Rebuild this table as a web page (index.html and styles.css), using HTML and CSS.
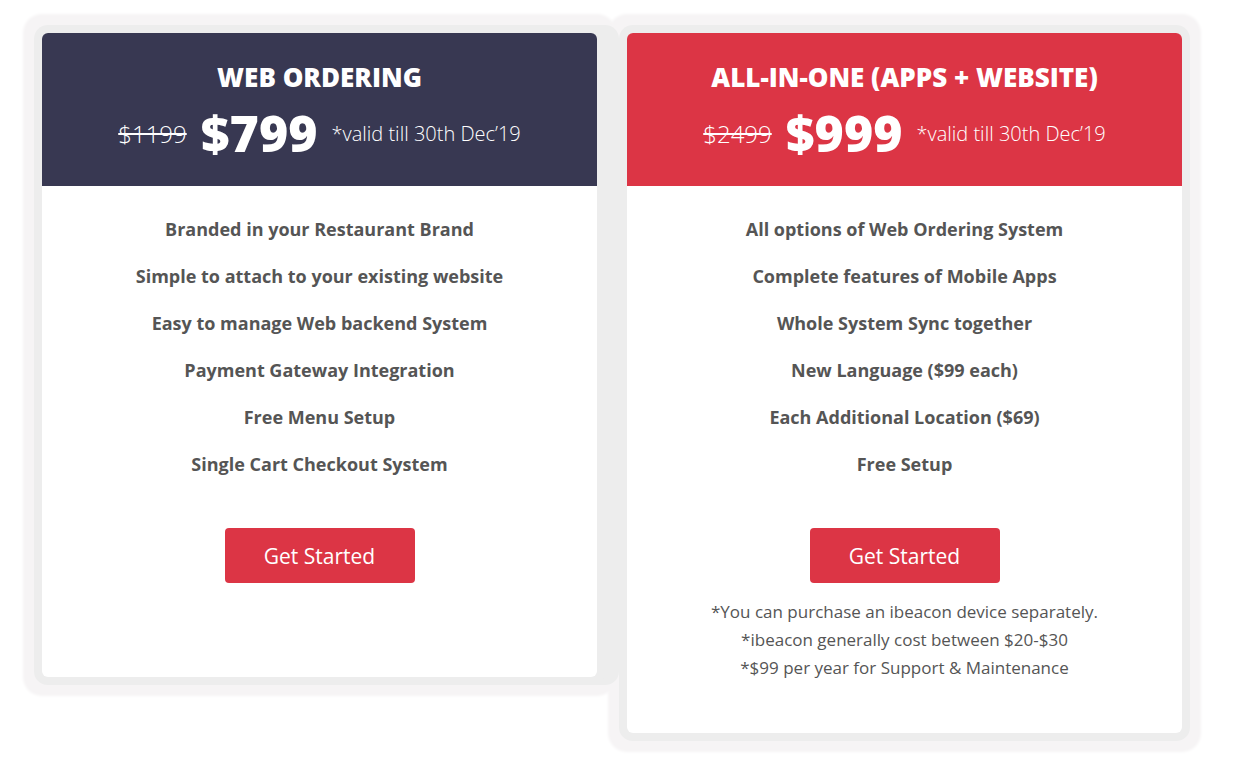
FILE: index.html
```html
<!DOCTYPE html>
<html lang="en">
<head>
  <meta charset="UTF-8" />
  <meta name="viewport" content="width=device-width, initial-scale=1.0" />
  <title>Pricing</title>
  <link rel="stylesheet" href="styles.css">
</head>
<body>
  <div class="plans">
    <div class="plan plan-short">
      <div class="plan-head dark">
        <h2>WEB ORDERING</h2>
        <div class="price">
          <span class="old">$1199</span>
          <span class="now">$799</span>
          <span class="valid">*valid till 30th Dec’19</span>
        </div>
      </div>
      <div class="plan-body">
        <ul class="features">
          <li>Branded in your Restaurant Brand</li>
          <li>Simple to attach to your existing website</li>
          <li>Easy to manage Web backend System</li>
          <li>Payment Gateway Integration</li>
          <li>Free Menu Setup</li>
          <li>Single Cart Checkout System</li>
        </ul>
        <button>Get Started</button>
      </div>
    </div>

    <div class="plan">
      <div class="plan-head red">
        <h2>ALL-IN-ONE (APPS + WEBSITE)</h2>
        <div class="price">
          <span class="old">$2499</span>
          <span class="now">$999</span>
          <span class="valid">*valid till 30th Dec’19</span>
        </div>
      </div>
      <div class="plan-body">
        <ul class="features">
          <li>All options of Web Ordering System</li>
          <li>Complete features of Mobile Apps</li>
          <li>Whole System Sync together</li>
          <li>New Language ($99 each)</li>
          <li>Each Additional Location ($69)</li>
          <li>Free Setup</li>
        </ul>
        <button>Get Started</button>
        <div class="notes">
          <p>*You can purchase an ibeacon device separately.</p>
          <p>*ibeacon generally cost between $20-$30</p>
          <p>*$99 per year for Support &amp; Maintenance</p>
        </div>
      </div>
    </div>
  </div>
</body>
</html>
```

FILE: styles.css
```css
* {
  box-sizing: border-box;
  margin: 0;
  padding: 0;
}

body {
  font-family: 'Open Sans', sans-serif;
  background: #fff;
  color: #555;
}

.plans {
  display: flex;
  align-items: flex-start;
  gap: 30px;
  padding: 33px 0 26px 42px;
}

.plan {
  position: relative;
  width: 555px;
  background: #fff;
  border-radius: 6px;
  box-shadow: 0 0 0 8px #ededed;
  text-align: center;
}

/* fill the gap between the two cards */
.plan-short {
  box-shadow: 0 0 0 8px #ededed, 14px 0 0 8px #ededed;
}

/* soft outer ring, kept behind both cards */
.plan::before {
  content: "";
  position: absolute;
  inset: 0;
  z-index: -1;
  border-radius: 6px;
  box-shadow: 0 0 3px 19px #f6f4f5;
}

.plan-head {
  height: 153px;
  padding-top: 27px;
  color: #fff;
  border-radius: 6px 6px 0 0;
}

.dark {
  background: #383852;
}

.red {
  background: #dc3545;
}

h2 {
  font-size: 26px;
  font-weight: 800;
  line-height: 34px;
}

.price {
  display: flex;
  justify-content: center;
  align-items: center;
  gap: 14px;
  margin-top: 9px;
}

.old {
  font-size: 24px;
  font-weight: 300;
  text-decoration: line-through;
}

.now {
  font-size: 50px;
  font-weight: 800;
  line-height: 60px;
}

.valid {
  font-size: 20px;
  font-weight: 300;
}

.plan-body {
  padding: 30px 20px 51px;
}

.plan-short .plan-body {
  padding-bottom: 94px;
}

.features {
  list-style: none;
}

.features li {
  font-size: 18px;
  font-weight: 700;
  line-height: 27px;
  margin-bottom: 20px;
}

.features li:last-child {
  margin-bottom: 0;
}

button {
  display: block;
  margin: 50px auto 0;
  width: 190px;
  height: 55px;
  background: #dc3545;
  color: #fff;
  border: none;
  border-radius: 4px;
  font-family: inherit;
  font-size: 21px;
  cursor: pointer;
}

.notes {
  margin-top: 15px;
  font-size: 17px;
  line-height: 28px;
}
```
